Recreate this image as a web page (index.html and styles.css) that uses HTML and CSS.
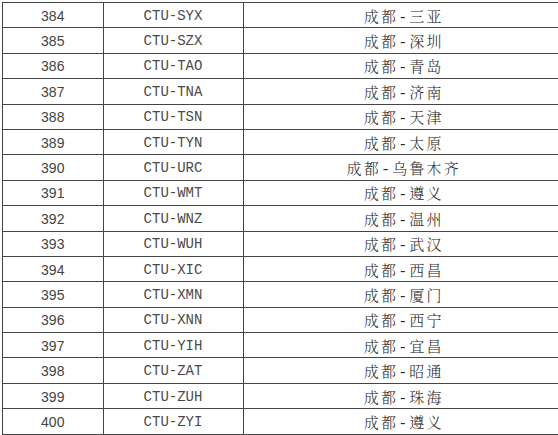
FILE: index.html
```html
<!DOCTYPE html>
<html lang="zh-CN">
<head>
<meta charset="utf-8">
<title>航线表</title>
<link rel="stylesheet" href="styles.css">
</head>
<body>
<div class="sheet">
<table class="routes">
<colgroup>
<col class="c-no"><col class="c-code"><col class="c-name">
</colgroup>
<tbody>
<tr><td class="no">384</td><td class="code">CTU-SYX</td><td class="name">成都-三亚</td></tr>
<tr><td class="no">385</td><td class="code">CTU-SZX</td><td class="name">成都-深圳</td></tr>
<tr><td class="no">386</td><td class="code">CTU-TAO</td><td class="name">成都-青岛</td></tr>
<tr><td class="no">387</td><td class="code">CTU-TNA</td><td class="name">成都-济南</td></tr>
<tr><td class="no">388</td><td class="code">CTU-TSN</td><td class="name">成都-天津</td></tr>
<tr><td class="no">389</td><td class="code">CTU-TYN</td><td class="name">成都-太原</td></tr>
<tr><td class="no">390</td><td class="code">CTU-URC</td><td class="name">成都-乌鲁木齐</td></tr>
<tr><td class="no">391</td><td class="code">CTU-WMT</td><td class="name">成都-遵义</td></tr>
<tr><td class="no">392</td><td class="code">CTU-WNZ</td><td class="name">成都-温州</td></tr>
<tr><td class="no">393</td><td class="code">CTU-WUH</td><td class="name">成都-武汉</td></tr>
<tr><td class="no">394</td><td class="code">CTU-XIC</td><td class="name">成都-西昌</td></tr>
<tr><td class="no">395</td><td class="code">CTU-XMN</td><td class="name">成都-厦门</td></tr>
<tr><td class="no">396</td><td class="code">CTU-XNN</td><td class="name">成都-西宁</td></tr>
<tr><td class="no">397</td><td class="code">CTU-YIH</td><td class="name">成都-宜昌</td></tr>
<tr><td class="no">398</td><td class="code">CTU-ZAT</td><td class="name">成都-昭通</td></tr>
<tr><td class="no">399</td><td class="code">CTU-ZUH</td><td class="name">成都-珠海</td></tr>
<tr><td class="no">400</td><td class="code">CTU-ZYI</td><td class="name">成都-遵义</td></tr>
</tbody>
</table>
</div>
</body>
</html>
```
FILE: styles.css
```css
html, body {
  margin: 0;
  padding: 0;
  background: #ffffff;
  overflow: hidden;
}

.sheet {
  padding: 2px 0 0 2px;
  width: 600px;
}

.routes {
  border-collapse: collapse;
  table-layout: fixed;
  width: 562px;
  color: #3a3a3a;
}

.c-no { width: 100.5px; }
.c-code { width: 140px; }
.c-name { width: 321.5px; }

.routes tr {
  height: 25.4px;
}

.routes td {
  border: 1px solid #454545;
  padding: 1px 0 0;
  text-align: center;
  vertical-align: middle;
  white-space: nowrap;
}

.no {
  font-family: "Liberation Sans", Arial, sans-serif;
  font-size: 14px;
  color: #444444;
}

.code {
  font-family: "Liberation Mono", "Courier New", monospace;
  font-size: 14px;
  color: #4a4a4a;
}

.name {
  font-family: "Liberation Mono", "Noto Serif CJK SC", "Noto Sans CJK SC", monospace;
  font-size: 15px;
  letter-spacing: 2.2px;
  font-weight: 300;
  color: #2a2a2a;
}
```
